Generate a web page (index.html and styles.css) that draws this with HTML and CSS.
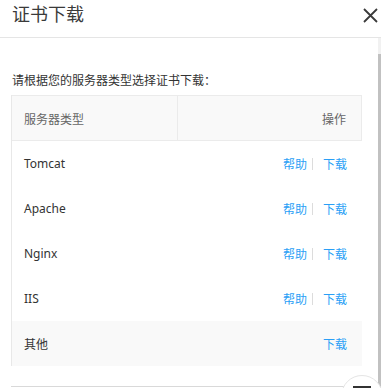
FILE: index.html
```html
<!DOCTYPE html>
<html lang="zh">
<head>
<meta charset="utf-8">
<link rel="stylesheet" href="styles.css">
</head>
<body>
<div class="dialog">
  <div class="header">
    <span class="title">证书下载</span>
    <svg class="close" width="15" height="15" viewBox="0 0 15 15"><path d="M1 1 L14 14 M14 1 L1 14" stroke="#3a3a3a" stroke-width="1.8" fill="none"/></svg>
  </div>
  <div class="content">
    <p class="tip">请根据您的服务器类型选择证书下载：</p>
    <div class="table">
      <div class="row head">
        <div class="c1">服务器类型</div>
        <div class="c2">操作</div>
      </div>
      <div class="row"><div class="c1">Tomcat</div><div class="c2"><a>帮助</a><span class="sep"></span><a>下载</a></div></div>
      <div class="row"><div class="c1">Apache</div><div class="c2"><a>帮助</a><span class="sep"></span><a>下载</a></div></div>
      <div class="row"><div class="c1">Nginx</div><div class="c2"><a>帮助</a><span class="sep"></span><a>下载</a></div></div>
      <div class="row"><div class="c1">IIS</div><div class="c2"><a>帮助</a><span class="sep"></span><a>下载</a></div></div>
      <div class="row hover"><div class="c1">其他</div><div class="c2"><a>下载</a></div></div>
    </div>
    <div class="next-box"></div>
  </div>
  <div class="scrollbar"><div class="thumb"></div></div>
  <div class="fab"><span class="fab-icon"></span></div>
</div>
</body>
</html>
```
FILE: styles.css
```css
html, body {
  margin: 0;
  padding: 0;
  background: #fff;
}
body {
  font-family: "Noto Sans", "Noto Sans CJK SC", sans-serif;
  color: #333;
  width: 381px;
  height: 388px;
  overflow: hidden;
}
.dialog {
  position: relative;
  width: 381px;
  height: 388px;
  overflow: hidden;
}
.header {
  height: 37px;
  border-bottom: 1px solid #e5e5e5;
  display: flex;
  align-items: flex-start;
  justify-content: space-between;
  padding-left: 12px;
  padding-right: 3px;
}
.title {
  font-size: 18px;
  line-height: 26px;
  color: #3a3a3a;
  font-family: "Noto Sans CJK SC", sans-serif;
}
.close {
  margin-top: 8px;
}
.content {
  padding: 0 19px 0 11px;
}
.tip {
  margin: 0;
  padding-top: 33px;
  font-size: 12px;
  line-height: 18px;
  height: 24px;
  padding-left: 1px;
  font-family: "Noto Sans CJK SC", sans-serif;
}
.table {
  border-left: 1px solid #e8e8e8;
}
.row {
  display: flex;
  height: 45px;
  align-items: center;
  font-size: 12px;
}
.row.head {
  background: #f9f9f9;
  border-top: 1px solid #ebebeb;
  border-right: 1px solid #ebebeb;
  border-bottom: 1px solid #ebebeb;
  height: 44px;
  color: #666;
  font-family: "Noto Sans CJK SC", sans-serif;
}
.row.hover {
  background: #f9f9f9;
}
.c1 {
  box-sizing: border-box;
  width: 166px;
  padding-left: 12px;
  height: 100%;
  display: flex;
  align-items: center;
}
.row.head .c1 {
  border-right: 1px solid #ebebeb;
}
.c2 {
  flex: 1;
  display: flex;
  justify-content: flex-end;
  align-items: center;
  padding-right: 15px;
}
.c2 a {
  color: #2a9ff6;
  font-family: "Noto Sans CJK SC", sans-serif;
  font-size: 12px;
}
.sep {
  display: inline-block;
  width: 1px;
  height: 12px;
  background: #dcdcdc;
  margin: 0 10px 0 5px;
}
.next-box {
  margin-top: 20px;
  height: 20px;
  border-top: 1px solid #d9d9d9;
}
.scrollbar {
  position: absolute;
  top: 38px;
  right: 0;
  width: 3px;
  height: 350px;
  background: #f1f1f1;
}
.thumb {
  margin-top: 16px;
  height: 334px;
  background: #c1c1c1;
}
.fab {
  position: absolute;
  left: 341px;
  top: 375px;
  width: 42px;
  height: 42px;
  border-radius: 50%;
  background: #fff;
  border: 1px solid #e5e5e5;
  box-sizing: border-box;
  display: flex;
  justify-content: center;
}
.fab-icon {
  display: block;
  width: 18px;
  height: 4px;
  margin-top: 10px;
  background: #333;
}
```
